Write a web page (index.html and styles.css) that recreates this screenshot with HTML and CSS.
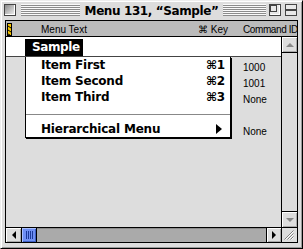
FILE: index.html
```html
<!DOCTYPE html>
<html lang="en">
<head>
    <meta charset="UTF-8">
    <title>Menu 131, “Sample”</title>
    <link rel="stylesheet" href="styles.css">
</head>
<body>
    <div class="window">
        <div class="titlebar">
            <div class="title-left">
                <span class="closebox"></span>
                <span class="stripes"></span>
            </div>
            <div class="title">Menu 131, “Sample”</div>
            <div class="title-right">
                <span class="stripes"></span>
                <svg class="zoombox" width="12" height="12" viewBox="0 0 12 12">
                    <rect x="0.5" y="0.5" width="11" height="11" fill="#e8e8e8" stroke="#444"/>
                    <rect x="1.5" y="1.5" width="6" height="6" fill="none" stroke="#444"/>
                    <path d="M1.5 10.5 H10.5 V1.5" fill="none" stroke="#fff"/>
                </svg>
                <svg class="collapsebox" width="12" height="12" viewBox="0 0 12 12">
                    <rect x="0.5" y="0.5" width="11" height="11" fill="#e8e8e8" stroke="#444"/>
                    <path d="M1 5.5 H11 M1 6.5 H11" stroke="#444" stroke-width="1"/>
                </svg>
            </div>
        </div>
        <div class="frame">
            <div class="colhead">
                <div class="col-mark">
                    <svg width="5" height="13" viewBox="0 0 5 13">
                        <rect width="5" height="13" fill="#000"/>
                        <rect x="1" y="1" width="3" height="11" fill="#f5c400"/>
                        <path d="M1 3 L4 5 M1 7 L4 9 M1 11 L3 12" stroke="#000" stroke-width="1"/>
                    </svg>
                </div>
                <div>Menu Text</div>
                <div>⌘ Key</div>
                <div class="col-id">Command ID</div>
            </div>
            <div class="body">
                <div class="pane">
                    <div class="menubar"><span class="menutitle">Sample</span></div>
                    <div class="content">
                        <div class="dropdown">
                            <div class="item"><span>Item First</span><span class="key">⌘1</span></div>
                            <div class="item"><span>Item Second</span><span class="key">⌘2</span></div>
                            <div class="item"><span>Item Third</span><span class="key">⌘3</span></div>
                            <div class="sep"></div>
                            <div class="item"><span>Hierarchical Menu</span><span class="submenu"></span></div>
                        </div>
                        <div class="ids">
                            <div class="id">1000</div>
                            <div class="id">1001</div>
                            <div class="id">None</div>
                            <div class="id"></div>
                            <div class="id">None</div>
                        </div>
                    </div>
                </div>
                <div class="vscroll">
                    <div class="arrow up"><span class="tri-up"></span></div>
                    <div class="vtrack"></div>
                    <div class="arrow down"><span class="tri-down"></span></div>
                </div>
            </div>
            <div class="hscroll">
                <div class="harrow"><span class="tri-left"></span></div>
                <div class="thumb"><span class="grip"></span></div>
                <div class="htrack"></div>
                <div class="harrow right"><span class="tri-right"></span></div>
                <div class="growbox">
                    <svg width="15" height="14" viewBox="0 0 15 14">
                        <path d="M2.5 11.5 L11.5 2.5 M5.5 11.5 L11.5 5.5 M8.5 11.5 L11.5 8.5" stroke="#808080"/>
                        <path d="M3.5 11.5 L11.5 3.5 M6.5 11.5 L11.5 6.5 M9.5 11.5 L11.5 9.5" stroke="#fff"/>
                    </svg>
                </div>
            </div>
        </div>
    </div>
</body>
</html>
```

FILE: styles.css
```css
body {
    margin: 0;
    background: #fff;
    font-family: "Liberation Sans", Arial, sans-serif;
    font-size: 10px;
    color: #000;
}
.window {
    width: 303px;
    height: 249px;
    box-sizing: border-box;
    background: #ddd;
    border: 1px solid #000;
    border-color: #eee #000 #000 #eee;
    padding: 0 4px 5px 4px;
    box-shadow: inset 1px 1px 0 #fff, inset -1px -1px 0 #999;
}
.titlebar {
    margin: 0 -4px;
    height: 19px;
    box-sizing: border-box;
    padding-top: 3px;
    display: grid;
    grid-template-columns: 1fr auto 1fr;
    align-items: start;
}
.title-left,
.title-right {
    display: flex;
}
.title-left {
    padding-left: 3px;
}
.title-right {
    padding-right: 5px;
}
.closebox {
    width: 12px;
    height: 12px;
    box-sizing: border-box;
    border: 1px solid #444;
    background: linear-gradient(135deg, #8a8a8a, #f4f4f4);
    box-shadow: inset -1px -1px 0 #fff;
    margin-right: 5px;
}
.stripes {
    flex: 1;
    height: 12px;
    background: repeating-linear-gradient(to bottom, #fafafa 0 1px, #8c8c8c 1px 2px);
}
.title {
    font: bold 12px/14px "DejaVu Sans", sans-serif;
    letter-spacing: -0.4px;
    padding: 0 5px;
    white-space: nowrap;
}
.zoombox {
    margin-left: 3px;
}
.collapsebox {
    margin-left: 4px;
}
.frame {
    height: 223px;
    box-sizing: border-box;
    border: 1px solid #000;
    display: flex;
    flex-direction: column;
    overflow: hidden;
    background: #ddd;
}
.colhead {
    flex: none;
    height: 15px;
    border-bottom: 1px solid #000;
    background: #bbb;
    display: grid;
    grid-template-columns: 35px 157px 45px 1fr;
    line-height: 17px;
    white-space: nowrap;
    overflow: hidden;
}
.col-id {
    letter-spacing: -0.4px;
}
.col-mark svg {
    display: block;
    margin: 2px 0 0 1px;
}
.body {
    flex: none;
    height: 190px;
    display: flex;
}
.pane {
    width: 275px;
    display: flex;
    flex-direction: column;
}
.menubar {
    flex: none;
    height: 17px;
    padding: 2px 0 0 19px;
    background: #fff;
    border-bottom: 1px solid #444;
}
.menutitle {
    display: block;
    width: 58px;
    height: 17px;
    box-sizing: border-box;
    padding-left: 7px;
    background: #000;
    color: #fff;
    font: bold 12px/17px "DejaVu Sans", sans-serif;
    letter-spacing: -0.4px;
}
.content {
    flex: 1;
    display: flex;
    align-items: flex-start;
    background: #ddd;
}
.dropdown {
    margin-left: 19px;
    width: 206px;
    box-sizing: border-box;
    border: 1px solid #000;
    border-top: 0;
    background: #fff;
    box-shadow: 1px 1px 0 #000;
    font: bold 12px/16px "DejaVu Sans", sans-serif;
    letter-spacing: -0.2px;
}
.item {
    height: 16px;
    display: flex;
    justify-content: space-between;
    align-items: center;
    padding: 0 5px 0 15px;
    white-space: nowrap;
}
.sep {
    height: 9px;
    border-bottom: 1px solid #888;
    margin-bottom: 6px;
}
.submenu {
    width: 0;
    height: 0;
    border-left: 6px solid #000;
    border-top: 5px solid transparent;
    border-bottom: 5px solid transparent;
    margin-right: 3px;
}
.ids {
    margin-left: 12px;
    padding-top: 3px;
}
.id {
    height: 16px;
    line-height: 16px;
}
.vscroll {
    width: 15px;
    border-left: 1px solid #000;
    display: flex;
    flex-direction: column;
    background: #ddd;
}
.arrow {
    flex: none;
    height: 15px;
    display: flex;
    align-items: center;
    justify-content: center;
    box-shadow: inset 1px 1px 0 #fff, inset -1px -1px 0 #aaa;
}
.arrow.up {
    border-bottom: 1px solid #000;
}
.arrow.down {
    border-top: 1px solid #000;
}
.vtrack {
    flex: 1;
}
.tri-up,
.tri-down {
    width: 0;
    height: 0;
    border-left: 4px solid transparent;
    border-right: 4px solid transparent;
}
.tri-up {
    border-bottom: 4px solid #888;
}
.tri-down {
    border-top: 4px solid #888;
}
.hscroll {
    flex: none;
    height: 14px;
    border-top: 1px solid #000;
    display: flex;
}
.harrow {
    width: 15px;
    background: #ddd;
    display: flex;
    align-items: center;
    justify-content: center;
    box-shadow: inset 1px 1px 0 #fff, inset -1px -1px 0 #aaa;
}
.harrow.right {
    width: 14px;
    border-left: 1px solid #000;
}
.tri-left,
.tri-right {
    width: 0;
    height: 0;
    border-top: 4px solid transparent;
    border-bottom: 4px solid transparent;
}
.tri-left {
    border-right: 4px solid #000;
}
.tri-right {
    border-left: 4px solid #000;
}
.thumb {
    width: 16px;
    box-sizing: border-box;
    border-left: 1px solid #000;
    border-right: 1px solid #000;
    background: #6f8ff3;
    display: flex;
    align-items: center;
    justify-content: center;
    box-shadow: inset 1px 1px 0 #aac0ff, inset -1px -1px 0 #3e5fc4;
}
.grip {
    width: 7px;
    height: 8px;
    background: repeating-linear-gradient(to right, #1d3a9a 0 1px, transparent 1px 2px);
}
.htrack {
    flex: 1;
    background: #aaa;
    box-shadow: inset 0 1px 0 #8c8c8c;
}
.growbox {
    width: 15px;
    border-left: 1px solid #000;
    background: #ddd;
}
.growbox svg {
    display: block;
}
```
